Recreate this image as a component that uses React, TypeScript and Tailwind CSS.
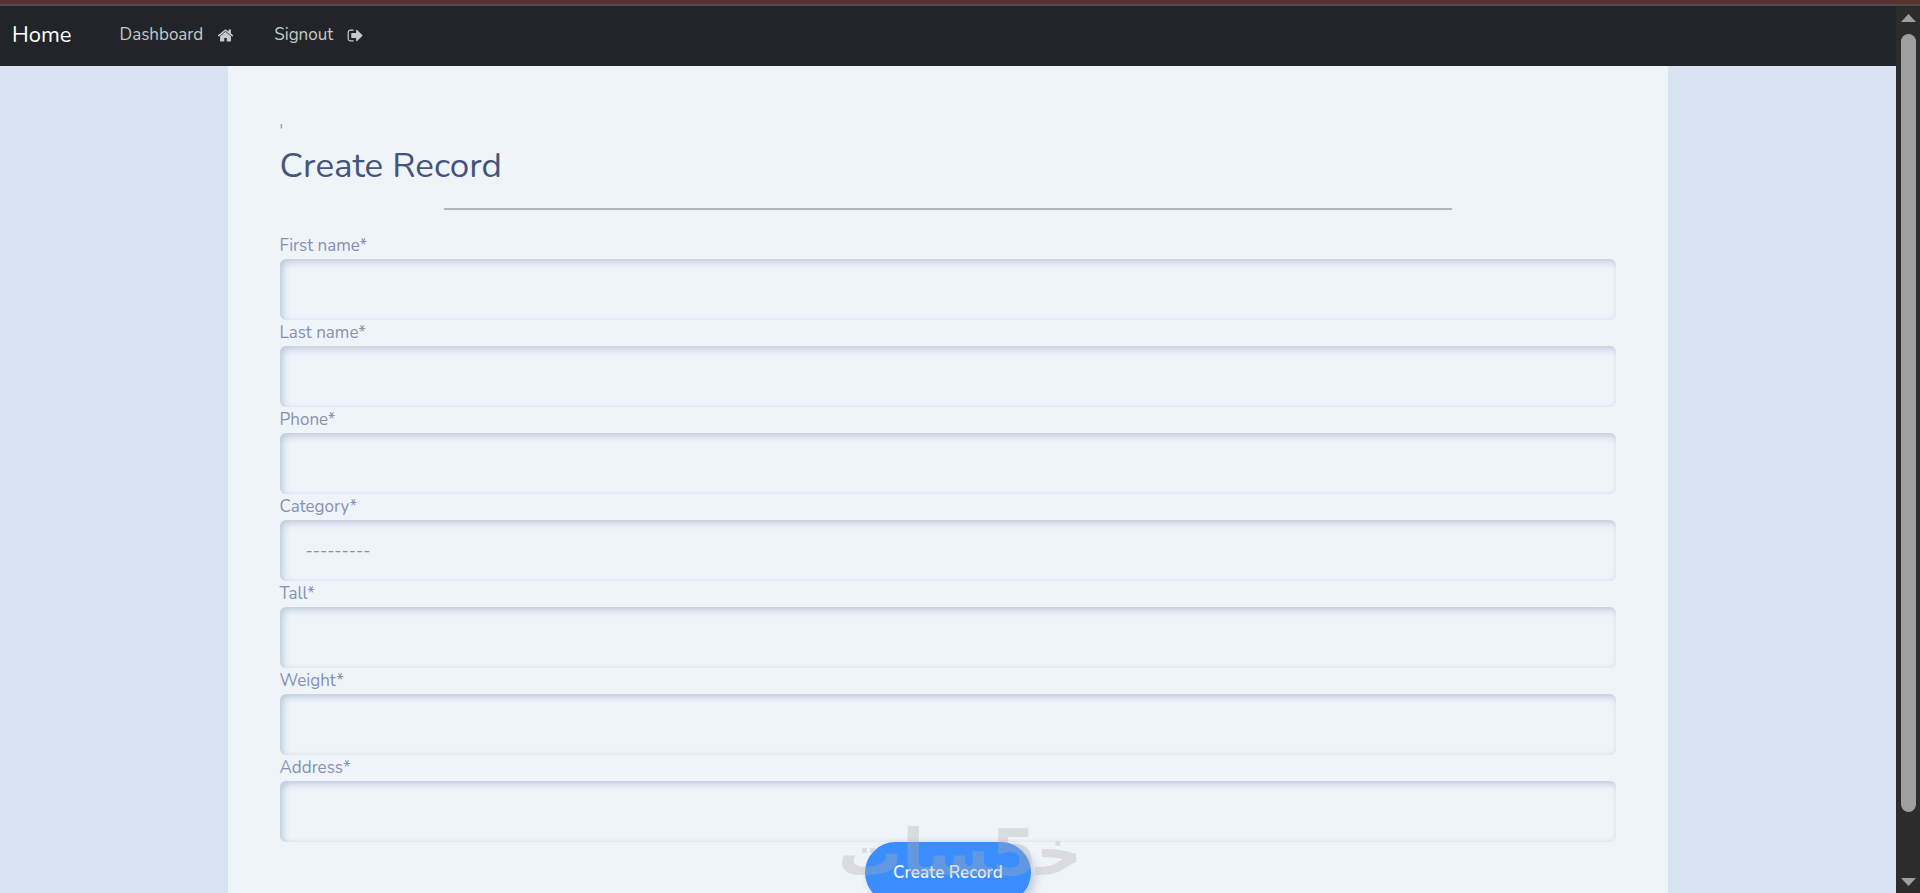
import type { ReactNode } from 'react';

type Field = {
  id: string;
  label: string;
  type?: 'text' | 'tel' | 'select';
};

const fields: Field[] = [
  { id: 'first_name', label: 'First name' },
  { id: 'last_name', label: 'Last name' },
  { id: 'phone', label: 'Phone', type: 'tel' },
  { id: 'category', label: 'Category', type: 'select' },
  { id: 'tall', label: 'Tall' },
  { id: 'weight', label: 'Weight' },
  { id: 'address', label: 'Address' },
];

// Inset look shared by inputs and the select
const controlClass =
  'block h-[61px] w-full appearance-none rounded-md bg-[#eff4f9] px-[26px] text-[17px] text-[#8690b5] outline-none shadow-[inset_3px_3px_7px_#bdc9dc,inset_-1px_-1px_3px_#e9eef3]';

export default function App() {
  return (
    <div className="flex h-screen flex-col overflow-hidden font-['Nunito','Lato',sans-serif]">
      <div className="h-1.5 shrink-0 border-b-2 border-[#56494a] bg-[#573432]" />
      <div className="flex min-h-0 flex-1">
        <div className="flex min-w-0 flex-1 flex-col bg-[#d9e3f1]">
          <Navbar />
          <main className="mx-auto min-h-0 w-[76%] flex-1 overflow-hidden bg-[#eff4f9] px-[52px] pt-[52px] text-[#8690b5]">
            <p className="text-base">'</p>
            <h1 className="text-[35px] leading-[48px] font-normal text-[#44547c]">Create Record</h1>
            <hr className="mx-41 mt-[18px] mb-[23px] border-t-2 border-[#b0b7be]" />
            <form className="flex flex-col items-center">
              {fields.map((field) => (
                <FormField key={field.id} field={field} />
              ))}
              <button
                type="submit"
                className="h-[61px] rounded-full bg-[#3a8dfd] px-7 text-[17px] font-semibold text-[#eff4f9] shadow-[4px_4px_10px_#bdc8dc]"
              >
                Create Record
              </button>
            </form>
          </main>
        </div>
        <Scrollbar />
      </div>
      <Watermark />
    </div>
  );
}

function Navbar() {
  return (
    <nav className="flex h-[60px] shrink-0 items-center bg-[#212529] px-3 pb-0.5">
      <a href="#" className="mr-12 text-[22px] text-white">Home</a>
      <div className="flex gap-10">
        <NavLink icon={<IconHome />}>Dashboard</NavLink>
        <NavLink icon={<IconSignOut />}>Signout</NavLink>
      </div>
    </nav>
  );
}

function NavLink({ icon, children }: { icon: ReactNode; children: ReactNode }) {
  return (
    <a href="#" className="flex items-center gap-3.5 text-[17px] text-[#c8c9ca]">
      {children}
      {icon}
    </a>
  );
}

function FormField({ field }: { field: Field }) {
  return (
    <div className="w-full">
      <label htmlFor={field.id} className="block text-[17px] leading-[26px]">{field.label}*</label>
      {field.type === 'select' ? (
        <select id={field.id} className={controlClass} required>
          <option value="">---------</option>
        </select>
      ) : (
        <input id={field.id} type={field.type ?? 'text'} className={controlClass} required />
      )}
    </div>
  );
}

function Scrollbar() {
  return (
    <div className="flex w-6 shrink-0 flex-col items-center bg-[#2c2c2c] pt-2 pb-[7px]" aria-hidden="true">
      <svg width="15" height="8" viewBox="0 0 15 8" fill="#9f9f9f">
        <path d="M7.5 0 15 8H0z" />
      </svg>
      <div className="mt-3 mb-[66px] w-[15px] flex-1 rounded-full bg-[#9f9f9f]" />
      <svg width="15" height="8" viewBox="0 0 15 8" fill="#9f9f9f">
        <path d="M0 0h15L7.5 8z" />
      </svg>
    </div>
  );
}

// Zero-width joiners keep the letters in their joined forms around the digit
function Watermark() {
  return (
    <div
      dir="rtl"
      lang="ar"
      className="pointer-events-none absolute inset-x-0 bottom-0 text-center font-['DejaVu_Sans',sans-serif] text-[64px] leading-[80px] font-bold text-[#b0b0b0]/35"
    >
      {'خ\u200D5\u200Dسات'}
    </div>
  );
}

const IconHome = () => (
  <svg width="17" height="17" viewBox="0 0 1792 1792" fill="currentColor">
    <path d="M1472 992v480q0 26-19 45t-45 19h-384v-384h-256v384h-384q-26 0-45-19t-19-45v-480q0-1 .5-3t.5-3l575-474 575 474q1 2 1 6zm223-69l-62 74q-8 9-21 11h-3q-13 0-21-7l-692-577-692 577q-12 8-24 7-13-2-21-11l-62-74q-8-10-7-23.5t11-21.5l719-599q32-26 76-26t76 26l244 204v-195q0-14 9-23t23-9h192q14 0 23 9t9 23v408l219 182q10 8 11 21.5t-7 23.5z" />
  </svg>
);

const IconSignOut = () => (
  <svg width="17" height="17" viewBox="0 0 1792 1792" fill="currentColor">
    <path d="M704 1440q0 4 1 20t.5 26.5-3 23.5-10 19.5-20.5 6.5h-320q-119 0-203.500-84.500t-84.500-203.500v-704q0-119 84.500-203.500t203.500-84.500h320q13 0 22.500 9.500t9.500 22.500q0 4 1 20t.5 26.500-3 23.500-10 19.500-20.500 6.500h-320q-66 0-113 47t-47 113v704q0 66 47 113t113 47h312l11.500 1 11.500 3 8 5.500 7 9 2 13.500zm928-544q0 26-19 45l-544 544q-19 19-45 19t-45-19-19-45v-288h-448q-26 0-45-19t-19-45v-384q0-26 19-45t45-19h448v-288q0-26 19-45t45-19 45 19l544 544q19 19 19 45z" />
  </svg>
);
